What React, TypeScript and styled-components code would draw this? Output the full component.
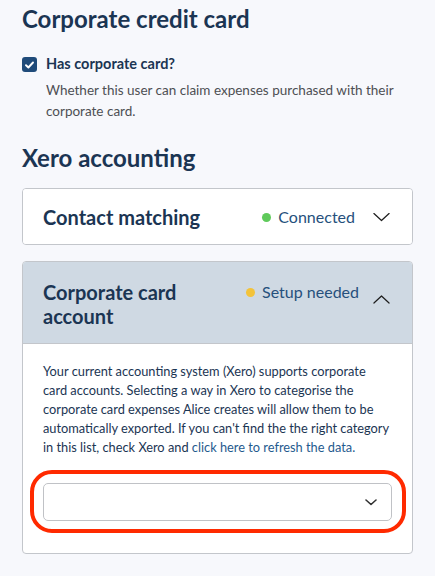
import React from 'react';
import styled, { createGlobalStyle } from 'styled-components';

const GlobalStyle = createGlobalStyle`
  body {
    margin: 0;
    background: #f7f8fc;
    font-family: Lato, "Open Sans", sans-serif;
    color: #1b3553;
  }
`;

const Chevron = ({ up, size = 17 }: { up?: boolean; size?: number }) => (
  <svg width={size} height={size / 2} viewBox="0 0 18 9" fill="none">
    <path
      d={up ? 'M1 8.5L9 1l8 7.5' : 'M1 0.5L9 8l8-7.5'}
      stroke="#1e1e1e"
      strokeWidth="1.3"
      strokeLinecap="round"
      strokeLinejoin="round"
    />
  </svg>
);

export default function App() {
  return (
    <Page>
      <GlobalStyle />
      <Heading>Corporate credit card</Heading>
      <CheckRow>
        <CheckBox>
          <svg width="9" height="8" viewBox="0 0 9 8">
            <path d="M1 4.2l2.4 2.3L8 1.5" stroke="#fff" strokeWidth="1.9" fill="none" strokeLinecap="round" strokeLinejoin="round" />
          </svg>
        </CheckBox>
        <div>
          <CheckLabel>Has corporate card?</CheckLabel>
          <CheckHint>Whether this user can claim expenses purchased with their corporate card.</CheckHint>
        </div>
      </CheckRow>

      <SubHeading>Xero accounting</SubHeading>

      <Card>
        <CardHeader>
          <CardTitle>Contact matching</CardTitle>
          <Status>
            <Dot color="#5fca5b" />
            Connected
          </Status>
          <ChevronBox>
            <Chevron />
          </ChevronBox>
        </CardHeader>
      </Card>

      <Card open>
        <CardHeader open>
          <CardTitle>Corporate card account</CardTitle>
          <Status>
            <Dot color="#f3c33a" />
            Setup needed
          </Status>
          <ChevronBox open>
            <Chevron up />
          </ChevronBox>
        </CardHeader>
        <CardBody>
          <BodyText>
            Your current accounting system (Xero) supports corporate card accounts. Selecting a way in Xero
            to categorise the corporate card expenses Alice creates will allow them to be automatically
            exported. If you can't find the the right category in this list, check Xero and{' '}
            <Link href="#">click here to refresh the data.</Link>
          </BodyText>
          <Highlight>
            <Select>
              <svg width="12" height="7" viewBox="0 0 12 7" fill="none">
                <path d="M1 1l5 4.5L11 1" stroke="#333" strokeWidth="1.6" strokeLinecap="round" strokeLinejoin="round" />
              </svg>
            </Select>
          </Highlight>
        </CardBody>
      </Card>
    </Page>
  );
}

const Page = styled.div`
  width: 391px;
  padding: 0 0 0 22px;
`;

const Heading = styled.h1`
  margin: 0;
  padding-top: 4px;
  font-size: 24px;
  line-height: 30px;
  font-weight: 700;
  color: #1b3553;
`;

const SubHeading = styled.h2`
  margin: 22px 0 15px;
  font-size: 24px;
  line-height: 30px;
  font-weight: 700;
  color: #1b3553;
`;

const CheckRow = styled.div`
  display: flex;
  gap: 9px;
  margin-top: 20px;
`;

const CheckBox = styled.div`
  flex: none;
  width: 15px;
  height: 15px;
  margin-top: 3px;
  border-radius: 3px;
  background: #1f4b7a;
  display: flex;
  align-items: center;
  justify-content: center;
`;

const CheckLabel = styled.div`
  font-size: 14.5px;
  line-height: 20px;
  font-weight: 700;
  color: #1b3553;
`;

const CheckHint = styled.p`
  margin: 6px 0 0;
  font-size: 13.5px;
  line-height: 20.5px;
  color: #4d4f53;
`;

const Card = styled.div<{ open?: boolean }>`
  background: #fff;
  border: 1px solid #c3c6cb;
  border-radius: 4px;
  overflow: hidden;
  margin-bottom: ${(p) => (p.open ? '0' : '16px')};
`;

const CardHeader = styled.div<{ open?: boolean }>`
  display: flex;
  align-items: flex-start;
  padding: ${(p) => (p.open ? '18px 20px 15px' : '16px 20px 15px')};
  background: ${(p) => (p.open ? '#cfd9e3' : '#fff')};
  border-bottom: ${(p) => (p.open ? '1px solid #c3c6cb' : 'none')};
`;

const CardTitle = styled.div`
  flex: 1;
  font-size: 20px;
  line-height: 24px;
  font-weight: 700;
  color: #1b3553;
  max-width: 190px;
  margin-right: auto;
`;

const Status = styled.div`
  display: flex;
  align-items: center;
  gap: 7px;
  margin-left: auto;
  font-size: 16px;
  line-height: 24px;
  color: #26507c;
`;

const Dot = styled.span<{ color: string }>`
  width: 9px;
  height: 9px;
  border-radius: 50%;
  background: ${(p) => p.color};
`;

const ChevronBox = styled.div<{ open?: boolean }>`
  display: flex;
  margin-left: ${(p) => (p.open ? '14px' : '18px')};
  margin-right: 2px;
  padding-top: ${(p) => (p.open ? '15px' : '8px')};
`;

const CardBody = styled.div`
  padding: 18px 20px 20px;
`;

const BodyText = styled.p`
  margin: 0;
  max-width: 347px;
  font-size: 12.8px;
  line-height: 19px;
  color: #1b3553;
`;

const Link = styled.a`
  color: #1f5a8e;
  text-decoration: none;
`;

const Highlight = styled.div`
  margin: 13px -14px 0 -13px;
  padding: 9px 10px 8px 9px;
  border: 4px solid #ff2a00;
  border-radius: 22px;
`;

const Select = styled.div`
  height: 36px;
  border: 1px solid #c0c2c6;
  border-radius: 5px;
  background: #fff;
  display: flex;
  align-items: center;
  justify-content: flex-end;
  padding-right: 14px;
`;
